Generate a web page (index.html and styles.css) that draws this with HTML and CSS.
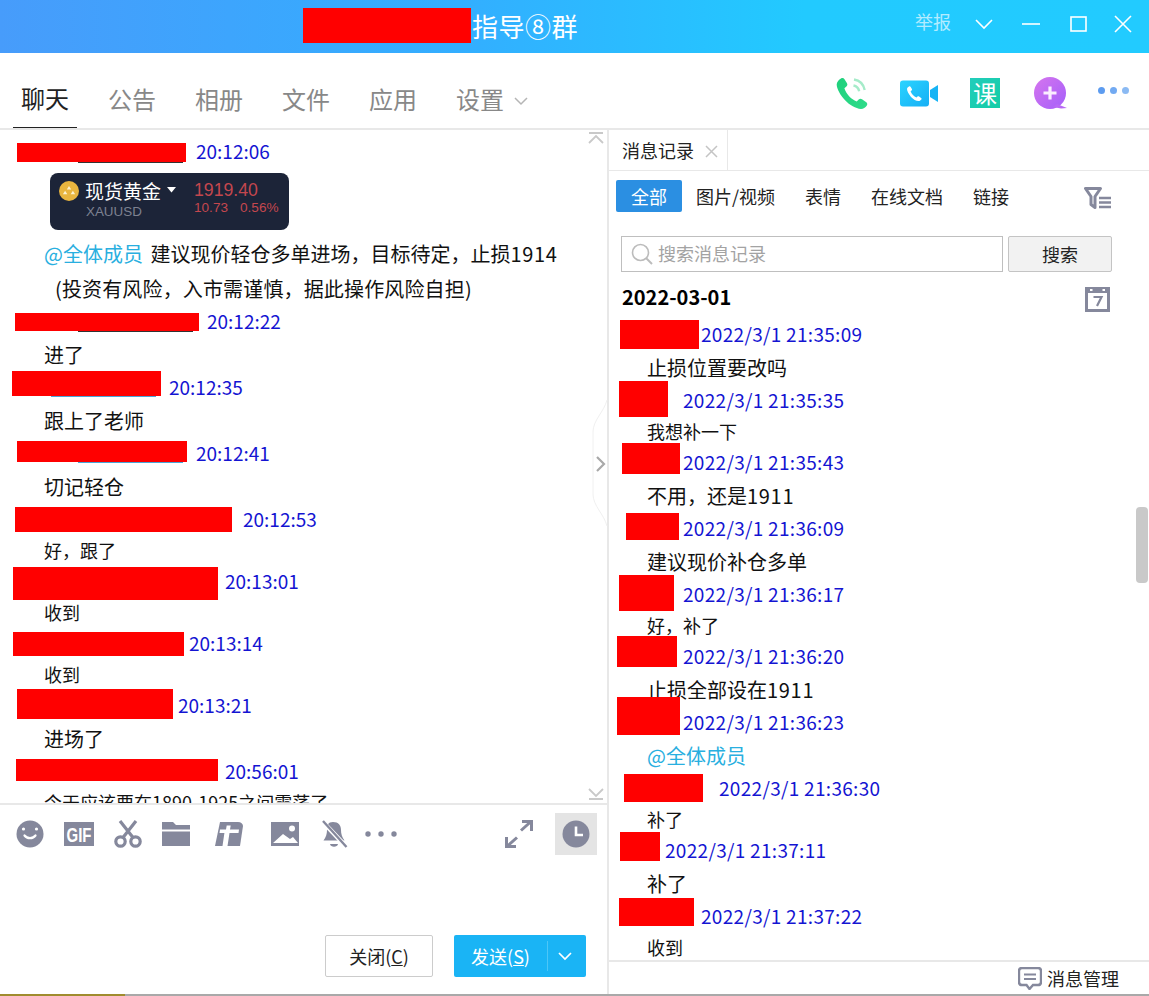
FILE: index.html
```html
<!DOCTYPE html>
<html lang="zh-CN">
<head>
<meta charset="UTF-8">
<title>指导⑧群</title>
<link rel="stylesheet" href="styles.css">
</head>
<body>
<div class="window">

  <!-- title bar -->
  <header class="titlebar">
    <div class="title"><span class="redact title-redact"></span><span>指导⑧群</span></div>
    <div class="winctl">
      <span class="report">举报</span>
      <svg class="ctl-down" width="18" height="12" viewBox="0 0 18 12"><path d="M1 2l8 8 8-8" fill="none" stroke="#fff" stroke-width="1.6"/></svg>
      <svg class="ctl-min" width="18" height="4" viewBox="0 0 18 4"><path d="M0 2h18" stroke="#fff" stroke-width="1.6"/></svg>
      <svg class="ctl-max" width="17" height="16" viewBox="0 0 17 16"><rect x="1" y="1" width="15" height="14" fill="none" stroke="#fff" stroke-width="1.6"/></svg>
      <svg class="ctl-close" width="18" height="18" viewBox="0 0 18 18"><path d="M1 1l16 16M17 1L1 17" stroke="#fff" stroke-width="1.6"/></svg>
    </div>
  </header>

  <!-- main tabs -->
  <nav class="tabs">
    <a class="tab active">聊天</a>
    <a class="tab">公告</a>
    <a class="tab">相册</a>
    <a class="tab">文件</a>
    <a class="tab">应用</a>
    <a class="tab">设置<svg class="tab-arrow" width="14" height="9" viewBox="0 0 14 9"><path d="M1 1l6 6 6-6" fill="none" stroke="#b5b5b5" stroke-width="1.5"/></svg></a>
    <div class="tools">
      <svg class="tool-phone" width="36" height="36" viewBox="0 0 36 36">
        <defs><linearGradient id="gPhone" x1="0" y1="0" x2="1" y2="1"><stop offset="0" stop-color="#1fd07c"/><stop offset="1" stop-color="#2fdc8a"/></linearGradient></defs>
        <path d="M7 2.500c1.300-.8 2.700-.5 3.500.7l2.500 4c.7 1.200.4 2.400-.6 3.300l-2 1.700c1 3 2.500 5.500 4.700 8 2.300 2.500 4.800 4.100 7.600 5.200l2-2c1-.9 2.300-1 3.300-.2l4.300 3.100c1.200.9 1.300 2.300.4 3.400-1.400 1.800-3.400 3.300-5.900 3.200-5-.2-11.100-3.700-15.700-8.600C6.300 19 2.700 13 2.700 8.500c0-2.500 2.200-4.800 4.300-6z" fill="url(#gPhone)"/>
        <path d="M19.500 9.500c3 .6 5 2.700 5.700 5.700M20 3.500c5.500.9 9.500 4.800 10.700 10.500" fill="none" stroke="#a5ebc9" stroke-width="2.400"/>
      </svg>
      <svg class="tool-video" width="38" height="27" viewBox="0 0 38 27">
        <defs><linearGradient id="gVideo" x1="0" y1="0" x2="1" y2="1"><stop offset="0" stop-color="#2ad4ff"/><stop offset="1" stop-color="#17aff5"/></linearGradient></defs>
        <rect x="0" y="0.500" width="29" height="26" rx="3" fill="url(#gVideo)"/>
        <path d="M30 10l8-5v17l-8-5z" fill="#17b4f5"/>
        <path d="M9 6.500c.7-.4 1.300-.2 1.700.4l1.200 2c.3.6.2 1.100-.3 1.500l-1 .9c.5 1.400 1.200 2.600 2.300 3.800 1.100 1.100 2.300 1.900 3.600 2.400l1-1c.5-.4 1.100-.5 1.600-.1l2 1.500c.6.400.6 1.100.2 1.600-.7.900-1.600 1.600-2.800 1.500-2.400-.1-5.300-1.800-7.500-4.100C8.800 14 7 11.200 7 9c0-1.100 1-2 2-2.500z" fill="#fff"/>
      </svg>
      <span class="tool-course">课</span>
      <svg class="tool-plus" width="36" height="36" viewBox="0 0 36 36">
        <defs><linearGradient id="gPlus" x1="0" y1="0" x2="1" y2="1"><stop offset="0" stop-color="#d675ee"/><stop offset="1" stop-color="#a45ffa"/></linearGradient></defs>
        <circle cx="17" cy="17" r="16" fill="url(#gPlus)"/>
        <path d="M24 28l10 4-6 .5-8-1.500z" fill="#b868f5"/>
        <path d="M17 10.500v13M10.500 17h13" stroke="#fbeeff" stroke-width="3.200"/>
      </svg>
      <div class="tool-more"><i></i><i></i><i></i></div>
    </div>
  </nav>

  <div class="main">

    <!-- chat pane -->
    <section class="chat">
      <div class="log">
        <div class="head"><span class="redact l1"></span><span class="time">20:12:06</span></div>
        <div class="quote">
          <div class="quote-left">
            <div class="quote-name"><svg width="20" height="20" viewBox="0 0 18 18"><circle cx="9" cy="9" r="9" fill="#e9b53f"/><path d="M9 4.500l2 3.200H7zM5.500 8.800l2 3.200h-4zM12.500 8.800l2 3.200h-4z" fill="#fdf2cf"/></svg>现货黄金<svg class="quote-arrow" width="9" height="6" viewBox="0 0 9 6"><path d="M0 0h9L4.500 5.500z" fill="#fff"/></svg></div>
            <div class="quote-code">XAUUSD</div>
          </div>
          <div class="quote-right">
            <div class="quote-price">1919.40</div>
            <div class="quote-diff"><span>10.73</span><span>0.56%</span></div>
          </div>
        </div>
        <div class="lines">
          <div class="first"><span class="mention">@全体成员</span> 建议现价轻仓多单进场，目标待定，止损<span class="num">1914</span></div>
          <div class="note">(投资有风险，入市需谨慎，据此操作风险自担)</div>
        </div>
        <div class="head"><span class="redact l2"></span><span class="time">20:12:22</span></div>
        <div class="text">进了</div>
        <div class="head"><span class="redact l3"></span><span class="time">20:12:35</span></div>
        <div class="text">跟上了老师</div>
        <div class="head"><span class="redact l4"></span><span class="time">20:12:41</span></div>
        <div class="text">切记轻仓</div>
        <div class="head"><span class="redact l5"></span><span class="time">20:12:53</span></div>
        <div class="text small">好，跟了</div>
        <div class="head"><span class="redact l6"></span><span class="time">20:13:01</span></div>
        <div class="text small">收到</div>
        <div class="head"><span class="redact l7"></span><span class="time">20:13:14</span></div>
        <div class="text small">收到</div>
        <div class="head"><span class="redact l8"></span><span class="time">20:13:21</span></div>
        <div class="text">进场了</div>
        <div class="head"><span class="redact l9"></span><span class="time">20:56:01</span></div>
        <div class="text small">今天应该要在1890-1925之间震荡了</div>

        <svg class="jump jump-top" width="16" height="14" viewBox="0 0 16 14"><path d="M1 1h14M1 11l7-7 7 7" fill="none" stroke="#c9c9c9" stroke-width="1.800"/></svg>
        <svg class="jump jump-end" width="16" height="14" viewBox="0 0 16 14"><path d="M1 13h14M1 3l7 7 7-7" fill="none" stroke="#c9c9c9" stroke-width="1.800"/></svg>
      </div>

      <svg class="fold" width="18" height="128" viewBox="0 0 18 128"><path d="M17 0C14 12 3 20 3 32v62c0 12 11 20 14 32" fill="#fff" stroke="#f0f0f0"/><path d="M7 57l7 7-7 7" fill="none" stroke="#a9a9a9" stroke-width="2.200"/></svg>

      <div class="composer">
        <div class="toolbar">
          <div class="icons">
            <svg width="28" height="28" viewBox="0 0 28 28"><circle cx="14" cy="14" r="13.500" fill="#85889c"/><circle cx="7.500" cy="9" r="1.600" fill="#fff"/><circle cx="20.500" cy="9" r="1.600" fill="#fff"/><path d="M8.500 15.500c2.500 3.500 8.500 3.500 11 0" fill="none" stroke="#fff" stroke-width="2.200" stroke-linecap="round"/></svg>
            <svg width="30" height="24" viewBox="0 0 30 24"><rect width="30" height="24" fill="#85889c"/><text transform="translate(15 19.500) scale(1 1.300)" text-anchor="middle" class="gif-text">GIF</text></svg>
            <svg width="28" height="28" viewBox="0 0 28 28"><g fill="none" stroke="#85889c" stroke-width="3.200"><circle cx="6.500" cy="21.500" r="4.700"/><circle cx="21.500" cy="21.500" r="4.700"/><path d="M9 17.500L22 1M19 17.500L6 1"/></g></svg>
            <svg width="28" height="24" viewBox="0 0 28 24"><path d="M0 0h11l3 3h14v4.500H0z" fill="#85889c"/><rect y="9.500" width="28" height="14.500" fill="#85889c"/></svg>
            <svg width="28" height="24" viewBox="0 0 28 24"><path d="M5 0h18c3 0 5 2 5 4l-3 20H0z" fill="#85889c"/><path d="M5 7.500h6l.7-4h4l-.7 4h9l-.5 3.500h-9l-2 13h-5l1.900-13H4.500z" fill="#fff"/></svg>
            <svg width="28" height="24" viewBox="0 0 28 24"><rect width="28" height="24" fill="#85889c"/><circle cx="21" cy="6.500" r="3" fill="#fff"/><path d="M2 21l10-9 7 5 3-2 5 6z" fill="#fff"/></svg>
            <svg width="27" height="29" viewBox="0 0 27 29"><path d="M12 2c5.500 0 8 3.500 8 8 0 4 1 7 3.500 10.500H2.500C5 17 6 14 6 10c0-4.500 1-8 6-8z" fill="#85889c"/><path d="M9 24h8c-.5 3.500-7.500 3.500-8 0z" fill="#85889c"/><path d="M1.500 1.500l24 25.500" stroke="#fff" stroke-width="4.500"/><path d="M2 1l23.500 26" stroke="#85889c" stroke-width="2.400"/></svg>
            <svg width="32" height="6" viewBox="0 0 32 6"><circle cx="3" cy="3" r="2.700" fill="#85889c"/><circle cx="16" cy="3" r="2.700" fill="#85889c"/><circle cx="29" cy="3" r="2.700" fill="#85889c"/></svg>
          </div>
          <svg class="expand" width="28" height="28" viewBox="0 0 28 28"><path d="M16 10.500L26 1.500M17 1.500h9.500V11M12 17.500l-10 9M1.500 17v9.500H11" fill="none" stroke="#85889c" stroke-width="3"/></svg>
          <div class="history"><svg width="28" height="28" viewBox="0 0 28 28"><circle cx="14" cy="14" r="13.500" fill="#85889c"/><path d="M14 6.500V15h7" fill="none" stroke="#fff" stroke-width="2.600"/></svg></div>
        </div>
        <div class="actions">
          <button class="btn btn-close">关闭(<u>C</u>)</button>
          <button class="btn btn-send"><span class="send-label">发送(<u>S</u>)</span><svg width="14" height="9" viewBox="0 0 14 9"><path d="M1 1l6 6 6-6" fill="none" stroke="#fff" stroke-width="1.700"/></svg></button>
        </div>
      </div>
    </section>

    <!-- message history pane -->
    <aside class="side">
      <div class="side-tabs">
        <div class="side-tab">消息记录<svg width="13" height="13" viewBox="0 0 13 13"><path d="M1 1l11 11M12 1L1 12" stroke="#c4c4c4" stroke-width="1.500"/></svg></div>
      </div>
      <div class="filters">
        <a class="filter on">全部</a>
        <a class="filter">图片/视频</a>
        <a class="filter">表情</a>
        <a class="filter">在线文档</a>
        <a class="filter">链接</a>
        <svg class="filter-icon" width="28" height="23" viewBox="0 0 28 23"><path d="M1.500 1.500h15l-5.500 8v11l-4-3v-8z" fill="none" stroke="#85889c" stroke-width="3" stroke-linejoin="round"/><path d="M15 11h12M15 15.500h12M15 20h12" stroke="#85889c" stroke-width="2.400"/></svg>
      </div>
      <div class="search">
        <div class="search-box"><svg width="22" height="22" viewBox="0 0 22 22"><circle cx="9.500" cy="9.500" r="8" fill="none" stroke="#bcbcbc" stroke-width="1.600"/><path d="M15 15l6 6" stroke="#bcbcbc" stroke-width="2"/></svg><span>搜索消息记录</span></div>
        <button class="search-btn">搜索</button>
      </div>
      <div class="date-row">
        <span class="date">2022-03-01</span>
        <svg class="calendar" width="25" height="25" viewBox="0 0 25 25"><path d="M0 0h25v25H0z" fill="#85889c"/><rect x="3" y="6" width="19" height="16" fill="#fff"/><rect x="5" y="2" width="2.500" height="2" fill="#fff"/><rect x="17.500" y="2" width="2.500" height="2" fill="#fff"/><path d="M8.500 10h8l-4.500 9" fill="none" stroke="#85889c" stroke-width="2.200"/></svg>
      </div>
      <div class="records">
        <div class="head"><span class="redact r1"></span><span class="time">2022/3/1 21:35:09</span></div>
        <div class="text">止损位置要改吗</div>
        <div class="head"><span class="redact r2"></span><span class="time">2022/3/1 21:35:35</span></div>
        <div class="text small">我想补一下</div>
        <div class="head"><span class="redact r3"></span><span class="time">2022/3/1 21:35:43</span></div>
        <div class="text">不用，还是<span class="num">1911</span></div>
        <div class="head"><span class="redact r4"></span><span class="time">2022/3/1 21:36:09</span></div>
        <div class="text">建议现价补仓多单</div>
        <div class="head"><span class="redact r5"></span><span class="time">2022/3/1 21:36:17</span></div>
        <div class="text small">好，补了</div>
        <div class="head"><span class="redact r6"></span><span class="time">2022/3/1 21:36:20</span></div>
        <div class="text">止损全部设在<span class="num">1911</span></div>
        <div class="head"><span class="redact r7"></span><span class="time">2022/3/1 21:36:23</span></div>
        <div class="text mention">@全体成员</div>
        <div class="head"><span class="redact r8"></span><span class="time">2022/3/1 21:36:30</span></div>
        <div class="text small">补了</div>
        <div class="head"><span class="redact r9"></span><span class="time">2022/3/1 21:37:11</span></div>
        <div class="text">补了</div>
        <div class="head"><span class="redact r10"></span><span class="time">2022/3/1 21:37:22</span></div>
        <div class="text small">收到</div>
        <div class="scrollbar"></div>
      </div>
      <div class="manage">
        <svg width="24" height="23" viewBox="0 0 24 23"><path d="M4 1h16c1.700 0 3 1.300 3 3v11c0 1.700-1.300 3-3 3h-5l-3.500 4-3-4H4c-1.700 0-3-1.300-3-3V4c0-1.700 1.300-3 3-3z" fill="none" stroke="#85889c" stroke-width="2.400"/><path d="M6 7.500h12M6 12h12" stroke="#85889c" stroke-width="2.200"/></svg>
        <span>消息管理</span>
      </div>
    </aside>
  </div>

  <div class="strip"><span class="strip-olive"></span></div>
</div>
</body>
</html>
```

FILE: styles.css
```css
html, body {
	margin: 0;
	padding: 0;
	background: #fff;
}

body {
	font-family: "Noto Sans CJK SC", "Noto Sans", sans-serif;
	color: #111;
	overflow: hidden;
}

.window {
	display: flex;
	flex-direction: column;
	width: 1149px;
	height: 996px;
}

.redact {
	position: relative;
	display: block;
	flex: none;
	background: #f00;
}

/* title bar */
.titlebar {
	display: flex;
	flex: none;
	height: 53px;
	background: linear-gradient(90deg, #479cfb 0%, #33aeff 40%, #22caff 70%, #22cbff 100%);
	color: #fff;
}

.title {
	display: flex;
	align-items: flex-start;
	padding-left: 303px;
	font-size: 26px;
	line-height: 51px;
	letter-spacing: .5px;
}

.title-redact {
	width: 168px;
	height: 35px;
	margin: 8px 1px 0 0;
}

.winctl {
	display: flex;
	align-items: center;
	margin-left: auto;
	height: 47px;
	padding-right: 17px;
}

.report {
	font-size: 18px;
	margin-bottom: 5px;
	opacity: .65;
}

.ctl-down { margin-left: 24px; }
.ctl-min { margin-left: 29px; }
.ctl-max { margin-left: 30px; }
.ctl-close { margin-left: 27px; }

/* main tabs */
.tabs {
	display: flex;
	flex: none;
	align-items: flex-end;
	height: 75px;
	padding-left: 13px;
	border-bottom: 2px solid #e8e8e8;
}

.tab {
	display: block;
	padding: 0 8px;
	margin-right: 23px;
	margin-bottom: -1px;
	height: 47px;
	line-height: 34px;
	font-size: 24px;
	color: #888;
	white-space: nowrap;
}

.tab.active {
	color: #222;
	border-bottom: 1px solid #222;
	margin-bottom: 0;
	height: 46px;
}

.tab-arrow {
	margin-left: 10px;
	vertical-align: 3px;
}

.tools {
	display: flex;
	align-items: center;
	align-self: stretch;
	margin-left: auto;
	padding-right: 20px;
	padding-top: 6px;
	height: 69px;
	box-sizing: content-box;
}

.tool-video { margin-left: 30px; }

.tool-course {
	display: block;
	width: 30px;
	height: 30px;
	margin-left: 32px;
	margin-bottom: 2px;
	background: linear-gradient(135deg, #22cdbb, #14cda6);
	color: #fff;
	font-size: 24px;
	line-height: 30px;
	text-align: center;
}

.tool-plus { margin-left: 33px; }

.tool-more {
	display: flex;
	gap: 5px;
	margin-left: 29px;
	margin-bottom: 6px;
}

.tool-more i {
	display: block;
	width: 7px;
	height: 7px;
	border-radius: 50%;
	background: #5d9cf0;
}

.tool-more i + i { background: #72aaf2; }
.tool-more i + i + i { background: #8bbaf3; }

.main {
	display: flex;
	flex: 1;
	min-height: 0;
}

/* chat pane */
.chat {
	position: relative;
	display: flex;
	flex-direction: column;
	flex: none;
	width: 607px;
	border-right: 2px solid #e8e8e8;
}

.log {
	position: relative;
	flex: none;
	height: 673px;
	padding-top: 5px;
	box-sizing: border-box;
	overflow: hidden;
}

.head {
	display: flex;
	height: 33px;
	line-height: 31px;
	white-space: nowrap;
}

.time {
	font-size: 19px;
	color: #1414d2;
}

.records .time {
	letter-spacing: .3px;
}

.text {
	height: 33px;
	line-height: 33px;
	padding-left: 44px;
	font-size: 20px;
	white-space: nowrap;
}

.text.small {
	height: 29px;
	line-height: 29px;
	font-size: 18px;
}

.mention { color: #29afe0; }

.num { letter-spacing: .7px; }

.lines {
	margin: 6px 0 -1px;
	padding-left: 44px;
	font-size: 20px;
	line-height: 35px;
	white-space: nowrap;
}

.first { word-spacing: 3px; }

.note {
	padding-left: 11px;
	letter-spacing: .15px;
}

.quote {
	display: flex;
	width: 239px;
	height: 57px;
	margin: 5px 0 0 50px;
	border-radius: 8px;
	background: #1c2438;
	box-sizing: border-box;
	padding: 6px 0 0 9px;
}

.quote-left { width: 135px; }

.quote-name {
	display: flex;
	align-items: center;
	gap: 6px;
	font-size: 19px;
	line-height: 24px;
	color: #fff;
}

.quote-arrow { margin-top: -3px; }

.quote-code {
	padding-left: 27px;
	margin-top: 2px;
	font-family: "Liberation Sans", sans-serif;
	font-size: 13.400px;
	line-height: 14px;
	color: #7c8190;
}

.quote-price {
	margin-top: 1px;
	font-family: "Liberation Sans", sans-serif;
	font-size: 17.700px;
	line-height: 20px;
	color: #c4474e;
}

.quote-diff {
	display: flex;
	gap: 12px;
	margin-top: 1px;
	font-family: "Liberation Sans", sans-serif;
	font-size: 13.600px;
	line-height: 14px;
	color: #c4474e;
}

/* redaction boxes, each one covers a different name */
.l1 { width: 169px; height: 19px; margin: 8px 10px 0 17px; }
.l2 { width: 184px; height: 18px; margin: 8px 8px 0 15px; }
.l3 { width: 149px; height: 25px; margin: 0 8px 0 12px; }
.l4 { width: 170px; height: 21px; margin: 4px 9px 0 17px; }
.l5 { width: 217px; height: 25px; margin: 4px 11px 0 15px; }
.l6 { width: 205px; height: 33px; margin: 2px 7px 0 13px; }
.l7 { width: 171px; height: 24px; margin: 5px 5px 0 13px; }
.l8 { width: 156px; height: 30px; margin: 0 5px 0 17px; }
.l9 { width: 202px; height: 22px; margin: 4px 7px 0 16px; }

.r1 { width: 79px; height: 29px; margin: 2px 2px 0 11px; }
.r2 { width: 49px; height: 36px; margin: -3px 15px 0 10px; }
.r3 { width: 58px; height: 31px; margin: -3px 3px 0 13px; }
.r4 { width: 53px; height: 27px; margin: 1px 4px 0 17px; }
.r5 { width: 55px; height: 36px; margin: -3px 9px 0 10px; }
.r6 { width: 60px; height: 31px; margin: -4px 6px 0 8px; }
.r7 { width: 63px; height: 38px; margin: -9px 3px 0 8px; }
.r8 { width: 79px; height: 28px; margin: 2px 16px 0 15px; }
.r9 { width: 40px; height: 29px; margin: -2px 5px 0 11px; }
.r10 { width: 75px; height: 28px; margin: -2px 7px 0 10px; }

/* what still shows under the boxes */
.l1::after, .l2::after, .l3::after, .l4::after {
	content: "";
	position: absolute;
	top: 100%;
	height: 1px;
	background: #333;
}

.l1::after { left: 61px; width: 105px; }
.l2::after { left: 63px; width: 115px; }
.l3::after { left: 39px; width: 105px; background: #4aa6d8; }
.l4::after { left: 61px; width: 105px; background: #4aa6d8; }

.jump {
	position: absolute;
	right: 3px;
}

.jump-top { top: 2px; }
.jump-end { bottom: 3px; }

.fold {
	position: absolute;
	top: 270px;
	right: -1px;
}

.composer {
	display: flex;
	flex-direction: column;
	flex: 1;
	border-top: 2px solid #e8e8e8;
}

.toolbar {
	display: flex;
	align-items: center;
	height: 42px;
	padding: 8px 10px 0 5px;
}

.icons {
	display: grid;
	grid-template-columns: 49px 49px 49px 48px 57px 56px 42px 52px;
	justify-items: center;
	align-items: center;
}

.gif-text {
	font-family: "Liberation Sans", sans-serif;
	font-weight: bold;
	font-size: 15px;
	fill: #fff;
}

.expand { margin-left: auto; }

.history {
	display: flex;
	align-items: center;
	justify-content: center;
	width: 42px;
	height: 42px;
	margin-left: 22px;
	background: #e4e4e4;
}

.actions {
	display: flex;
	justify-content: flex-end;
	gap: 21px;
	margin-top: auto;
	padding: 0 21px 17px 0;
}

.btn {
	display: flex;
	align-items: center;
	justify-content: center;
	height: 42px;
	padding: 0;
	border: 0;
	border-radius: 2px;
	font-family: inherit;
	font-size: 18px;
	line-height: 26px;
}

.btn-close {
	width: 108px;
	background: #fff;
	border: 1px solid #ccc;
	color: #222;
}

.btn-send {
	width: 132px;
	background: #1ab4f5;
	color: #fff;
}

.send-label {
	display: block;
	width: 93px;
	padding-right: 1px;
	line-height: 30px;
	border-right: 1px solid #4dc6f7;
	text-align: center;
	box-sizing: border-box;
}

.btn-send svg { margin: 0 13px 0 10px; }

/* message history pane */
.side {
	position: relative;
	display: flex;
	flex-direction: column;
	flex: 1;
	min-width: 0;
}

.side-tabs {
	flex: none;
	height: 40px;
	border-bottom: 1px solid #e8e8e8;
}

.side-tab {
	display: flex;
	align-items: center;
	width: 119px;
	height: 40px;
	padding-left: 13px;
	border-right: 1px solid #e8e8e8;
	box-sizing: border-box;
	font-size: 18px;
	color: #222;
}

.side-tab svg { margin: 2px 0 0 11px; }

.filters {
	display: flex;
	align-items: center;
	flex: none;
	height: 32px;
	margin: 9px 0 0 7px;
	font-size: 18px;
}

.filter {
	display: block;
	padding: 0 15px;
	line-height: 32px;
	color: #222;
	white-space: nowrap;
}

.filter.on {
	margin-right: -1px;
	background: #2b8fe2;
	color: #fff;
	border-radius: 2px;
}

.filter-icon {
	margin: 4px 37px 0 auto;
}

.search {
	display: flex;
	flex: none;
	gap: 5px;
	margin: 24px 37px 0 12px;
}

.search-box {
	display: flex;
	align-items: center;
	gap: 5px;
	flex: 1;
	height: 36px;
	padding-left: 9px;
	border: 1px solid #bfbfbf;
	box-sizing: border-box;
	font-size: 18px;
	color: #a3a3a3;
}

.search-box span { margin-bottom: 2px; }

.search-btn {
	width: 104px;
	height: 36px;
	padding: 0;
	border: 1px solid #c4c4c4;
	border-radius: 2px;
	background: #f2f2f2;
	font-family: inherit;
	font-size: 18px;
	line-height: 26px;
	color: #222;
}

.date-row {
	display: flex;
	align-items: center;
	justify-content: space-between;
	flex: none;
	height: 32px;
	margin: 10px 39px 4px 13px;
}

.date {
	margin-bottom: 4px;
	font-size: 20px;
	font-weight: bold;
	color: #000;
}

.calendar { margin-top: 2px; }

.records {
	position: relative;
	flex: 1;
	min-height: 0;
}

.records .text {
	padding-left: 38px;
}

.scrollbar {
	position: absolute;
	top: 189px;
	right: 1px;
	width: 12px;
	height: 76px;
	border-radius: 4px;
	background: #c9c9c9;
}

.manage {
	display: flex;
	align-items: center;
	justify-content: flex-end;
	flex: none;
	gap: 5px;
	height: 32px;
	padding-right: 30px;
	border-top: 2px solid #e8e8e8;
	font-size: 18px;
	color: #222;
}

.strip {
	flex: none;
	height: 2px;
	background: #a9a9a9;
}

.strip-olive {
	display: block;
	width: 125px;
	height: 2px;
	background: #a08c2e;
}
```
